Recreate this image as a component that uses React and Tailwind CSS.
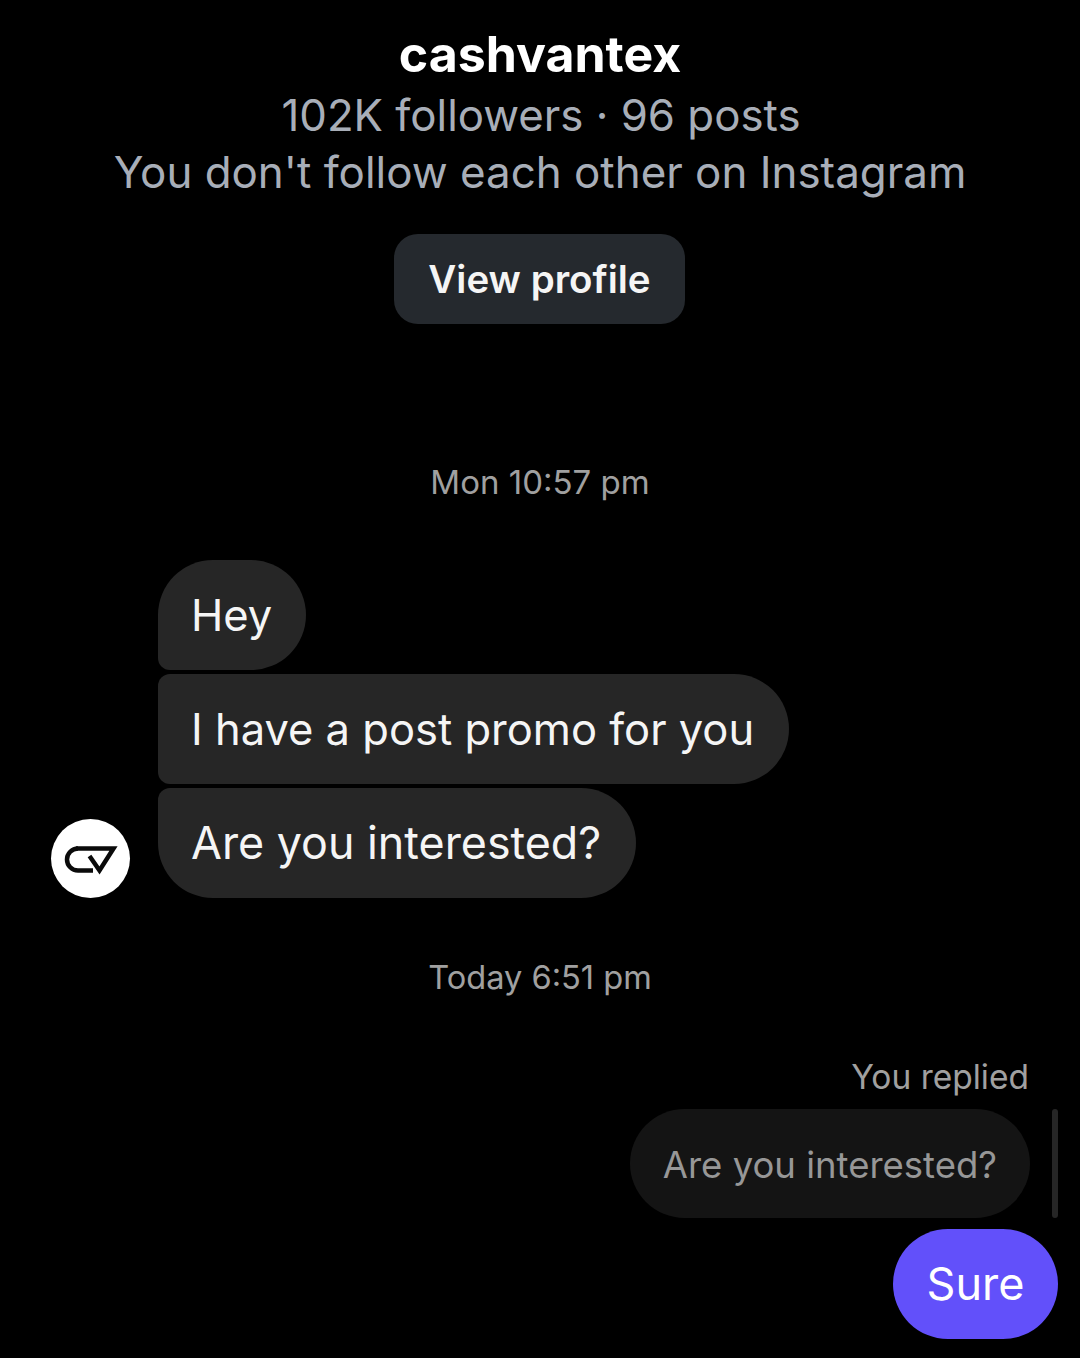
export default function App() {
  const sans = "font-['Inter','Liberation_Sans',sans-serif]";
  return (
    <div className={`w-[1080px] h-[1358px] bg-black overflow-hidden flex flex-col ${sans}`}>
      <div className="flex flex-col items-center pt-[26px]">
        <div className="text-[50px] leading-[57px] font-bold text-white">cashvantex</div>
        <div className="mt-[4px] ml-[2px] text-[43.800px] leading-[57px] text-[#a8aeb8]">102K followers · 96 posts</div>
        <div className="text-[43.900px] leading-[57px] text-[#a8aeb8]">You don't follow each other on Instagram</div>
        <div className="mt-[33px] mr-[1px] w-[291px] h-[90px] pt-[1px] rounded-[24px] bg-[#25292e] flex items-center justify-center text-[38.500px] font-semibold text-[#f5f5f5]">View profile</div>
      </div>
      <div className="mt-[136px] text-center text-[33px] leading-[44px] text-[#a0a0a0]">Mon 10:57 pm</div>
      <div className="mt-[56px] pl-[51px] flex items-end gap-[28px]">
        <div className="w-[79px] h-[79px] rounded-full bg-white flex items-center justify-center">
          <svg viewBox="0 0 79 79" className="w-[79px] h-[79px]">
            <path d="M27 29.500a11 11 0 0 0 0 22H42" fill="none" stroke="#0a0a0a" strokeWidth="4.500" />
            <path d="M25 29.500H62.500L48.500 51.500L38.500 37" fill="none" stroke="#0a0a0a" strokeWidth="4.500" />
          </svg>
        </div>
        <div className="flex flex-col items-start gap-1 text-[#f5f5f5]">
          <div className="h-[110px] flex items-center pt-[1px] pl-[33px] pr-[34px] text-[43.500px] bg-[#262626] rounded-[55px] rounded-bl-[12px]">Hey</div>
          <div className="h-[110px] flex items-center pt-[2px] pl-[33px] pr-[35px] text-[43.500px] bg-[#262626] rounded-r-[55px] rounded-l-[12px]">I have a post promo for you</div>
          <div className="h-[110px] flex items-center pt-[2px] pl-[33px] pr-[35px] text-[44.800px] bg-[#262626] rounded-[55px] rounded-tl-[12px]">Are you interested?</div>
        </div>
      </div>
      <div className="mt-[57px] text-center text-[32.600px] leading-[44px] text-[#a0a0a0]">Today 6:51 pm</div>
      <div className="mt-[56px] pr-[22px] flex flex-col items-end">
        <div className="pr-[29px] text-[33.500px] leading-[44px] text-[#a0a0a0]">You replied</div>
        <div className="mt-[10px] flex items-stretch gap-[22px]">
          <div className="h-[109px] flex items-center pt-[3px] pl-[33px] pr-[33px] bg-[#141414] rounded-[55px] text-[36.500px] text-[#979797]">Are you interested?</div>
          <div className="w-[6px] rounded-full bg-[#262626]"></div>
        </div>
        <div className="mt-[11px] h-[110px] w-[165px] flex items-center justify-center bg-[#6250fa] rounded-[55px] text-[45px] text-white">Sure</div>
      </div>
    </div>
  );
}
